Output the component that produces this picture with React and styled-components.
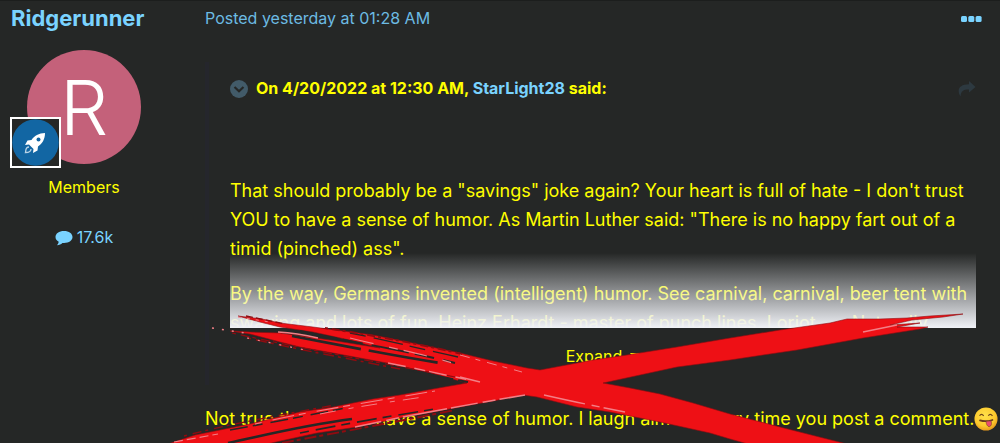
import React from "react";
import styled, { createGlobalStyle } from "styled-components";

const Global = createGlobalStyle`
  * { box-sizing: border-box; }
  body { margin: 0; background: #252726; color: #ffff00; font-family: Inter, "Liberation Sans", sans-serif; font-size: 18px; line-height: 29px; }
  p { margin: 0; }
`;
const Post = styled.article`
  position: relative;
  display: grid;
  grid-template-columns: 168px minmax(0, 1fr);
  column-gap: 37px;
  overflow: hidden;
  border-top: 1px solid #1c1e1d;
  padding-top: 3px;
  min-height: 100vh;
`;
const Author = styled.aside`
  display: flex;
  flex-direction: column;
  align-items: center;
  font-size: 16px;
`;
const Name = styled.a`
  align-self: flex-start;
  padding-left: 11px;
  color: #7ad3ff;
  font-size: 22px;
  font-weight: 700;
  text-decoration: none;
`;
const AvatarWrap = styled.div`
  position: relative;
  margin-top: 17px;
`;
const Avatar = styled.div`
  width: 114px;
  height: 114px;
  border-radius: 50%;
  background: #c4617a;
  color: #fff;
  display: grid;
  place-items: center;
  font-size: 76px;
  font-weight: 300;
`;
const Badge = styled.div`
  position: absolute;
  left: -17px;
  bottom: -4px;
  width: 51px;
  height: 51px;
  border: 2px solid #fff;
  background: #252726;
`;
const Art = styled.svg`
  display: block;
  width: ${(p) => p.$w}px;
  height: ${(p) => p.$h}px;
  flex: none;
`;
const Group = styled.p`
  margin-top: 9px;
`;
const Count = styled.a`
  margin-top: 21px;
  display: flex;
  align-items: center;
  gap: 4px;
  color: #7ad3ff;
  text-decoration: none;
`;
const Content = styled.div`
  display: flex;
  flex-direction: column;
`;
const Meta = styled.header`
  display: flex;
  justify-content: space-between;
  align-items: center;
  padding-right: 18px;
  font-size: 16px;
  a { color: #6cbbe3; text-decoration: none; }
`;
const IconButton = styled.button`
  display: block;
  border: 0;
  padding: 0;
  background: none;
`;
const Quote = styled.blockquote`
  margin: 29px 0 0;
  padding: 12px 24px 14px 21px;
  border-left: 4px solid #25262c;
`;
const Cite = styled.header`
  display: flex;
  align-items: center;
  gap: 8px;
  font-size: 16px;
  font-weight: 700;
  cite { flex: 1; font-style: normal; }
  a { color: #7ad3ff; text-decoration: none; }
`;
const Clip = styled.div`
  position: relative;
  margin-top: 73px;
  height: 152px;
  overflow: hidden;
  p + p { margin-top: 16px; }
  &::after {
    content: "";
    position: absolute;
    inset: auto 0 0 0;
    height: 75px;
    background: linear-gradient(to bottom, rgba(240, 242, 247, 0), #f0f2f7);
  }
`;
const Expand = styled.button`
  display: flex;
  align-items: center;
  gap: 8px;
  margin: 14px auto 0;
  border: 0;
  padding: 0;
  background: none;
  color: #ffff00;
  font: inherit;
  font-size: 16px;
  line-height: 29px;
`;
const Reply = styled.p`
  display: flex;
  align-items: center;
  margin-top: 19px;
  white-space: nowrap;
`;
const Strokes = styled.svg`
  position: absolute;
  left: 0;
  top: -1px;
  width: 100%;
  pointer-events: none;
`;

function RedCross() {
  return (
    <Strokes viewBox="0 0 1000 443" fill="none" aria-hidden="true">
      <g fill="#ee1015" stroke="#8f0b10" strokeWidth="0.6">
        <path d="M238 316L262 319 280 323 313 327 343 331 373 335 417 344 460 353 493 361 527 368 540 370 593 360 627 355 677 347 730 338 780 330 830 323 847 319 880 319 907 318 930 316 963 314 943 317 912 320 890 325 920 323 897 327 928 327 920 329 863 338 797 350 763 355 730 360 677 367 640 375 603 383 630 388 660 394 693 403 730 414 780 427 847 444H748L730 439 710 433 660 422 610 412 577 407 537 397 523 395 493 401 460 407 433 412 400 418 357 427 317 433 267 444H168L195 435 250 424 270 419 300 412 333 407 373 399 400 395 433 389 467 383 427 372 387 363 333 353 300 347 280 342 250 334 230 331 250 332 280 333 330 340 380 348 345 339 313 332 280 327 260 322Z" />
      </g>
      <g stroke="#252726">
        <path d="M228 443C270 434 305 425 352 419" strokeWidth="2.5" />
        <path d="M300 331C350 342 400 349 455 363" strokeWidth="2" strokeDasharray="38 6 20 9" />
        <path d="M292 336C350 347 395 356 440 363" strokeWidth="2.6" strokeDasharray="70 8" />
        <path d="M350 333C395 342 420 349 458 357" strokeWidth="1.3" strokeDasharray="16 8 30 7" />
        <path d="M330 354C380 363 420 373 468 382" strokeWidth="1.8" strokeDasharray="26 5 12 7" />
        <path d="M230 430C280 421 310 415 350 407" strokeWidth="1.5" strokeDasharray="18 5 10 8" />
        <path d="M300 433C345 424 390 416 435 409" strokeWidth="1.6" strokeDasharray="9 7 20 6" />
      </g>
      <g stroke="#8f0b10">
        <path d="M232 333C300 348 370 361 455 377" strokeWidth="1.2" strokeDasharray="4 5 9 3" />
        <path d="M248 338C300 350 345 358 400 369" strokeWidth="1.5" strokeDasharray="3 5 11 4" />
        <path d="M325 328C365 334 410 342 462 354" strokeWidth="2" strokeDasharray="3 4 8 3" />
        <path d="M184 436C225 425 275 416 335 405" strokeWidth="1.4" strokeDasharray="3 6 9 4" />
        <path d="M282 443C330 434 385 424 455 410" strokeWidth="2" strokeDasharray="12 3 4 4" />
        <path d="M246 316L285 324" strokeWidth="1.4" strokeDasharray="7 3" />
      </g>
      <g stroke="#f27f86">
        <path d="M278 332C295 333 305 335 318 338" strokeWidth="1.6" />
        <path d="M350 338C385 347 420 353 452 363" strokeWidth="1.2" strokeDasharray="24 16 9 6" />
        <path d="M388 363C415 368 430 372 470 380" strokeWidth="1.4" strokeDasharray="18 9 11 4" />
        <path d="M460 355L522 372" strokeWidth="1" strokeDasharray="10 6 5 7" />
        <path d="M460 377L480 382" strokeWidth="1.5" />
        <path d="M544 395C575 402 590 405 625 412" strokeWidth="1.4" strokeDasharray="42 7 8 4" />
        <path d="M355 427C400 417 465 405 525 395" strokeWidth="1.5" strokeDasharray="27 5 13 4 45 4" />
        <path d="M255 424C300 413 370 402 435 391" strokeWidth="1.1" strokeDasharray="7 11 22 5" />
        <path d="M320 414C360 406 390 402 430 396" strokeWidth="1" strokeDasharray="16 13 5 8" />
        <path d="M174 442L218 434" strokeWidth="1.2" strokeDasharray="9 4" />
        <path d="M863 332L897 325" strokeWidth="1.5" />
        <path d="M238 317L270 322" strokeWidth="1" strokeDasharray="3 6" />
        <path d="M212 328L245 333" strokeWidth="1.6" strokeDasharray="2 8" />
        <path d="M247 338L310 351" strokeWidth="1.2" strokeDasharray="2 9" />
      </g>
    </Strokes>
  );
}

export default function App() {
  return (
    <>
      <Global />
      <Post>
        <Author>
          <Name href="#user">Ridgerunner</Name>
          <AvatarWrap>
            <Avatar>R</Avatar>
            <Badge>
              <Art $w={47} $h={47} viewBox="0 0 47 47" aria-label="Rank">
                <circle cx="23.5" cy="23.5" r="23.3" fill="#1266a3" />
                <path d="M33 14C27 14 22 17 19.500 21L15.500 21.500 13 26 17 25.500 21.500 30 21 34 25.500 31.500 26 27.500C30.500 24.500 33 20 33 14Z" fill="#fff" />
                <circle cx="26.5" cy="20.500" r="2" fill="#1266a3" />
                <path d="M17 28C13 28 14 32 13.500 33.500 16 33.500 19 33.500 19 30" fill="none" stroke="#b9d3e6" strokeWidth="1.3" />
              </Art>
            </Badge>
          </AvatarWrap>
          <Group>Members</Group>
          <Count href="#posts">
            <Art $w={18} $h={16} viewBox="0 0 18 16" aria-hidden="true">
              <path d="M9 1C4 1 .5 3.600 .5 7 .5 9 1.700 10.700 3.700 11.800 3.500 13.200 2.800 14.300 2 15.200 4.300 15 6 14.200 7.400 12.900 13.500 13.500 17.500 10.700 17.500 7 17.500 3.600 14 1 9 1Z" fill="#7ad3ff" />
            </Art>
            17.6k
          </Count>
        </Author>
        <Content>
          <Meta>
            <a href="#post">Posted yesterday at 01:28 AM</a>
            <IconButton aria-label="More options">
              <Art $w={21} $h={6} viewBox="0 0 21 6">
                <g fill="#7ad3ff">
                  <rect width="6" height="6" rx="1.5" />
                  <rect x="7.3" width="6" height="6" rx="1.5" />
                  <rect x="14.6" width="6" height="6" rx="1.5" />
                </g>
              </Art>
            </IconButton>
          </Meta>
          <Quote>
            <Cite>
              <IconButton aria-label="Collapse quote">
                <Art $w={18} $h={18} viewBox="0 0 18 18">
                  <circle cx="9" cy="9" r="9" fill="#425b69" />
                  <path d="M4.500 7L9 11.300 13.500 7" fill="none" stroke="#252726" strokeWidth="2.2" />
                </Art>
              </IconButton>
              <cite>On 4/20/2022 at 12:30 AM, <a href="#starlight">StarLight28</a> said:</cite>
              <IconButton aria-label="Go to quoted post">
                <Art $w={18} $h={16} viewBox="0 0 18 16">
                  <path d="M11 0L17.500 6 11 11.500V8.500C6 8.300 3 9.500 2.500 15.500 -1.500 9 1 3.300 11 3.300Z" fill="#2d3940" />
                </Art>
              </IconButton>
            </Cite>
            <Clip>
              <p>That should probably be a "savings" joke again? Your heart is full of hate - I don't trust YOU to have a sense of humor. As Martin Luther said: "There is no happy fart out of a timid (pinched) ass".</p>
              <p>By the way, Germans invented (intelligent) humor. See carnival, carnival, beer tent with swaying and lots of fun. Heinz Erhardt - master of punch lines. Loriot ..... Naturally</p>
            </Clip>
            <Expand>
              Expand
              <Art $w={10} $h={7} viewBox="0 0 10 7" aria-hidden="true"><path d="M0 0H10L5 6Z" fill="#ffff00" /></Art>
            </Expand>
          </Quote>
          <Reply>
            Not true that I don't have a sense of humor. I laugh almost every time you post a comment.
            <Art $w={24} $h={24} viewBox="0 0 26 26" role="img" aria-label="Squinting face with tongue">
              <defs>
                <radialGradient id="face" cx="45%" cy="35%" r="65%">
                  <stop offset="0" stopColor="#ffe04a" />
                  <stop offset="0.7" stopColor="#fcc92c" />
                  <stop offset="1" stopColor="#e79a1d" />
                </radialGradient>
              </defs>
              <circle cx="13" cy="13" r="12.5" fill="url(#face)" />
              <path d="M6 9.500Q8 6.500 10.500 9.500M15.500 9.500Q17.500 6.500 20 9.500" fill="none" stroke="#6e431a" strokeWidth="1.3" />
              <path d="M6.500 14.500Q13 16.500 20 14" fill="none" stroke="#6b3a1c" strokeWidth="1.8" strokeLinecap="round" />
              <path d="M13 15.500L18.500 15Q20 20.500 16.500 21.300Q13.500 21 13 15.500Z" fill="#ec4b70" stroke="#6b3a1c" strokeWidth="0.6" />
            </Art>
          </Reply>
        </Content>
        <RedCross />
      </Post>
    </>
  );
}
